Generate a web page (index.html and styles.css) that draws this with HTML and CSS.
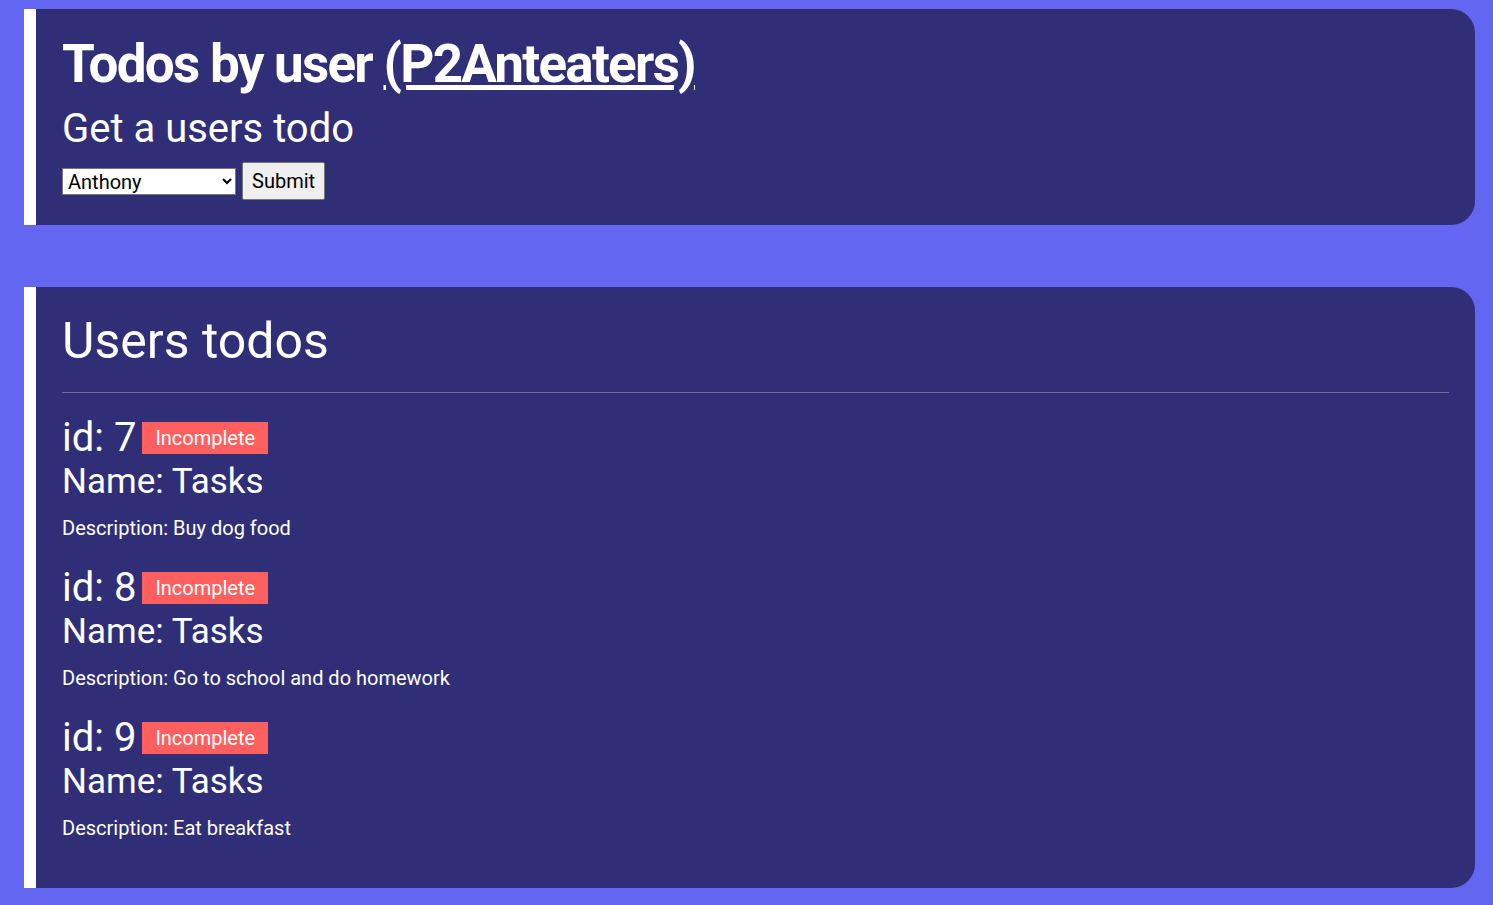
FILE: index.html
```html
<!DOCTYPE html>
<html lang="en">
<head>
<meta charset="utf-8">
<title>Todos by user</title>
<link rel="stylesheet" href="styles.css">
</head>
<body>
<main class="page">
  <section class="card">
    <h1 class="title">Todos by user <a class="title-link" href="#">(P2Anteaters)</a></h1>
    <h2 class="subtitle">Get a users todo</h2>
    <form class="picker">
      <select class="picker-select">
        <option>Anthony</option>
      </select>
      <button type="button" class="picker-btn">Submit</button>
    </form>
  </section>

  <section class="card card-list">
    <h2 class="list-title">Users todos</h2>
    <hr class="divider">
    <div class="todo">
      <div class="todo-head"><span class="todo-id">id: 7</span><span class="badge">Incomplete</span></div>
      <h3 class="todo-name">Name: Tasks</h3>
      <p class="todo-desc">Description: Buy dog food</p>
    </div>
    <div class="todo">
      <div class="todo-head"><span class="todo-id">id: 8</span><span class="badge">Incomplete</span></div>
      <h3 class="todo-name">Name: Tasks</h3>
      <p class="todo-desc">Description: Go to school and do homework</p>
    </div>
    <div class="todo">
      <div class="todo-head"><span class="todo-id">id: 9</span><span class="badge">Incomplete</span></div>
      <h3 class="todo-name">Name: Tasks</h3>
      <p class="todo-desc">Description: Eat breakfast</p>
    </div>
  </section>
</main>
</body>
</html>
```

FILE: styles.css
```css
html, body {
  margin: 0;
  padding: 0;
  background: #6366f1;
  font-family: Roboto, "Liberation Sans", sans-serif;
  color: #ffffff;
}

.page {
  display: flex;
  flex-direction: column;
  gap: 62px;
  padding: 9px 18px 17px 24px;
}

.card {
  background: #312e78;
  border-left: 12px solid #ffffff;
  border-radius: 0 24px 24px 0;
  padding: 21px 26px 25px 26px;
}

.card-list {
  padding-bottom: 24px;
}

.title {
  margin: 2px 0 0;
  font-size: 53px;
  font-weight: 700;
  line-height: 64px;
  letter-spacing: -1.75px;
}

.title-link {
  color: #ffffff;
}

.subtitle {
  margin: 9px 0 0;
  font-size: 40px;
  font-weight: 400;
  line-height: 48px;
}

.picker {
  display: flex;
  align-items: center;
  gap: 6px;
  margin-top: 9px;
}

.picker-select {
  width: 174px;
  height: 27px;
  font-family: Roboto, "Liberation Sans", sans-serif;
  font-size: 20px;
  border: 1px solid #767676;
  border-radius: 0;
  background: #ffffff;
  color: #000000;
  padding: 0 1px;
}

.picker-btn {
  height: 38px;
  padding: 0 9px;
  font-family: Roboto, "Liberation Sans", sans-serif;
  font-size: 20px;
  background: #efefef;
  border: 1px solid #767676;
  border-radius: 2px;
  color: #000000;
}

.list-title {
  margin: 3px 0 0;
  font-size: 50px;
  font-weight: 400;
  line-height: 60px;
}

.divider {
  border: 0;
  border-top: 1px solid #6f6ea3;
  margin: 21px 0 21px;
}

.todo {
  display: flex;
  flex-direction: column;
  margin-bottom: 24px;
}

.todo-head {
  display: flex;
  align-items: center;
  gap: 6px;
}

.todo-id {
  font-size: 40px;
  line-height: 48px;
}

.badge {
  background: #ff5f5f;
  font-size: 20px;
  line-height: 32px;
  padding: 0 13px;
}

.todo-name {
  margin: 0;
  font-size: 35px;
  font-weight: 400;
  line-height: 40px;
}

.todo-desc {
  margin: 14px 0 0;
  font-size: 20px;
  line-height: 24px;
}
```
